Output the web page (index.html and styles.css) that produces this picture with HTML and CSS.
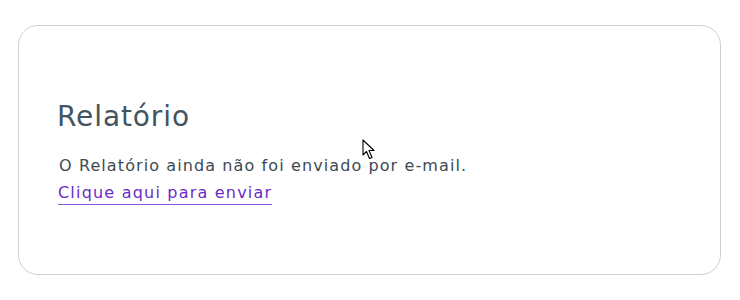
FILE: index.html
```html
<!DOCTYPE html>
<html>
<head>
    <meta charset="utf-8">
    <meta name="viewport" content="width=device-width, initial-scale=1">
    <title>Relatório</title>
    <link rel="stylesheet" href="styles.css">
</head>
<body>
<div class="page">
    <div class="report-card">
        <h2 class="report-title">Relatório</h2>
        <p class="report-text">O Relatório ainda não foi enviado por e-mail.</p>
        <a class="report-link" href="#">Clique aqui para enviar</a>
    </div>
    <svg class="cursor" width="16" height="22" viewBox="0 0 16 22">
        <path d="M1 1 L1 16 L4.5 12.5 L7.5 19.5 L10 18.5 L7 11.5 L12 11.5 Z" fill="#fff" stroke="#000" stroke-width="1.1" stroke-linejoin="round"/>
    </svg>
</div>
</body>
</html>
```

FILE: styles.css
```css
body {
    margin: 0;
    background: #fff;
    font-family: "DejaVu Sans", sans-serif;
}

.page {
    position: relative;
    padding: 25px 19px 0 18px;
}

.report-card {
    box-sizing: border-box;
    height: 250px;
    border: 1px solid #c9d1d8;
    border-radius: 20px;
    padding: 74px 38px 0;
    display: flex;
    flex-direction: column;
    align-items: flex-start;
}

.report-title {
    margin: 0 0 20px;
    font-size: 28px;
    line-height: 34px;
    letter-spacing: 0.9px;
    font-weight: 400;
    color: #44545f;
}

.report-text {
    margin: 0 0 3px 2px;
    font-size: 16px;
    line-height: 24px;
    letter-spacing: 1.1px;
    color: #3d4a54;
}

.report-link {
    margin-left: 1px;
    font-size: 16px;
    line-height: 23px;
    letter-spacing: 1.2px;
    color: #6a2cc4;
    text-decoration: none;
    border-bottom: 1px solid #8a55d8;
}

.cursor {
    position: absolute;
    left: 362px;
    top: 139px;
}
```
